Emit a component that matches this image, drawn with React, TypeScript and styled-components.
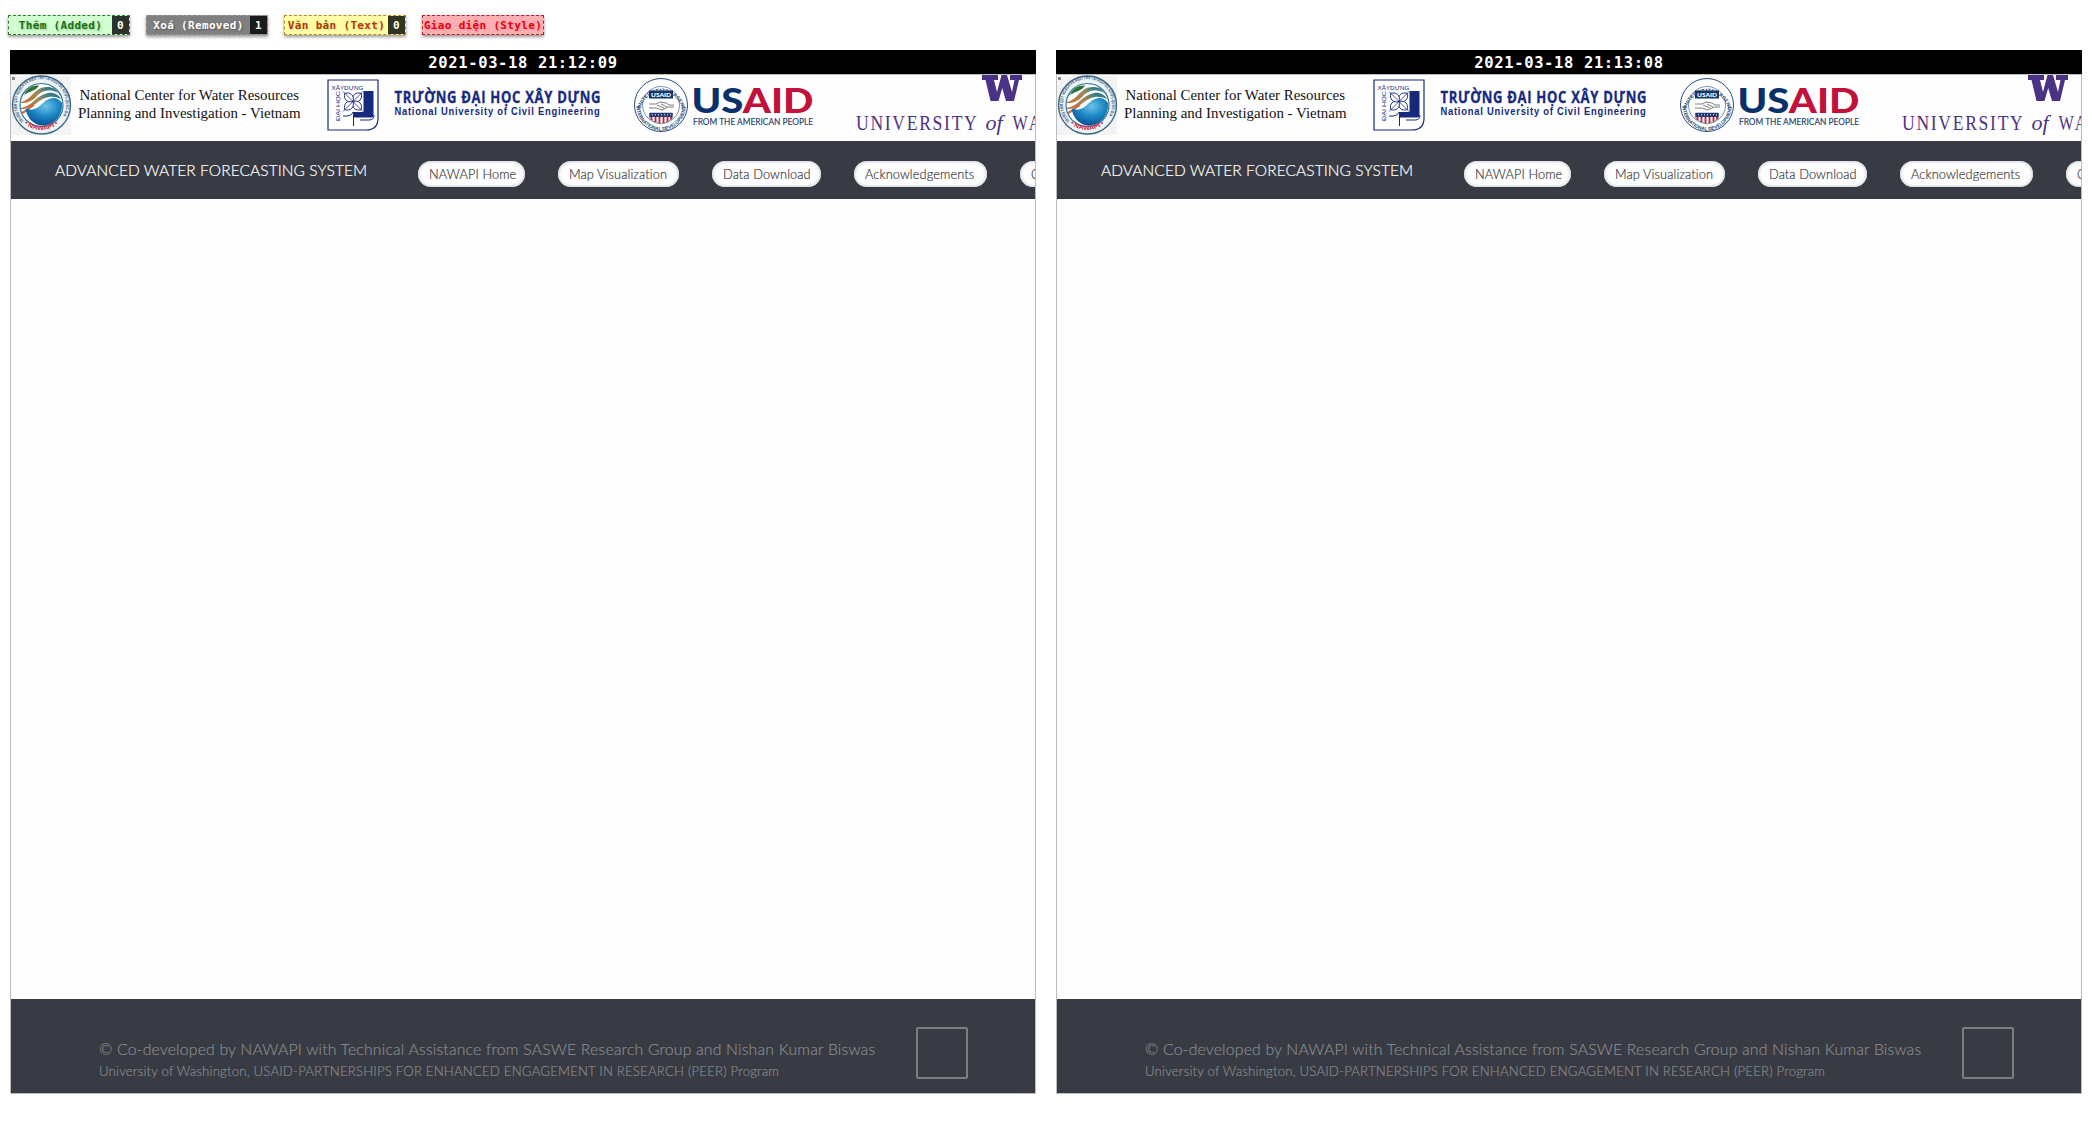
import React from "react";
import styled, { createGlobalStyle, css } from "styled-components";

const GlobalStyle = createGlobalStyle`
  *, *::before, *::after { box-sizing: border-box; }
  body { margin: 0; background: #fff; overflow: hidden; }
`;

const mono = css`
  font-family: "DejaVu Sans Mono", "Liberation Mono", monospace;
  font-weight: 700;
`;

const Page = styled.main`
  height: 1135px;
  padding: 15px 10px 0;
`;

const Legend = styled.div`
  display: flex;
  gap: 16px;
  margin: 0 0 15px -2px;
`;

const Tag = styled.div<{ $bg: string; $fg: string; $line: string; $glow: string }>`
  ${mono}
  display: flex;
  width: 122px;
  height: 20px;
  border: 1px dashed ${(p) => p.$line};
  background: ${(p) => p.$bg};
  color: ${(p) => p.$fg};
  font-size: 11px;
  letter-spacing: 0.33px;
  line-height: 19px;
  white-space: nowrap;
  text-shadow: 1px 1px 2px ${(p) => p.$glow};
  box-shadow: 0 2px 3px rgba(0, 0, 0, 0.4);
`;

const TagLabel = styled.span`
  flex: 1;
  display: flex;
  justify-content: center;
`;

const TagCount = styled.span`
  width: 17px;
  background: rgba(0, 0, 0, 0.8);
  color: #fff;
  text-align: center;
  text-shadow: none;
`;

const Comparison = styled.div`
  display: grid;
  grid-template-columns: 1026px 1026px;
  gap: 20px;
`;

const Stamp = styled.div`
  ${mono}
  height: 24px;
  background: #000;
  color: #fff;
  font-size: 15.5px;
  letter-spacing: 0.63px;
  line-height: 26px;
  text-align: center;
`;

const Frame = styled.section`
  display: flex;
  flex-direction: column;
  height: 1020px;
  border: 1px solid #bdbdbd;
  background: #fdfdfd;
  overflow: hidden;
`;

const LogoStrip = styled.header`
  display: flex;
  flex: none;
  height: 66px;
  background: #fefefe;
  overflow: hidden;

  svg { flex: none; display: block; }
`;

const Nav = styled.nav`
  display: flex;
  flex: none;
  height: 58px;
  padding-left: 44px;
  background: #383b43;
  font-family: Lato, "Open Sans", sans-serif;
  white-space: nowrap;
  overflow: hidden;
`;

const Brand = styled.div`
  flex: none;
  width: 363px;
  color: #fff;
  font-size: 15.5px;
  font-weight: 300;
  letter-spacing: 0.08px;
  line-height: 59px;
  -webkit-text-stroke: 0.2px;
`;

const Pills = styled.div`
  display: flex;
  flex: none;
  gap: 33px;
  padding-top: 20px;
`;

const Pill = styled.a<{ $width: number }>`
  flex: none;
  width: ${(p) => p.$width}px;
  height: 26px;
  padding-left: 11px;
  border-radius: 13px;
  background: #fefefe;
  box-shadow: inset 0 0 3px 1px #cdd1d6;
  color: #404040;
  font-size: 12.8px;
  font-weight: 300;
  letter-spacing: 0.1px;
  line-height: 27px;
  -webkit-text-stroke: 0.2px;
`;

const Content = styled.div`
  flex: 1;
`;

const Footer = styled.footer`
  display: flex;
  flex: none;
  height: 94px;
  padding: 28px 0 0 88px;
  background: #383b43;
  color: #8c8d90;
  font-family: Lato, "Open Sans", sans-serif;
  font-weight: 300;
  white-space: nowrap;
  -webkit-text-stroke: 0.15px;
`;

const Credits = styled.div`
  width: 817px;
  padding-top: 10px;
`;

const CreditMain = styled.p`
  margin: 0;
  font-size: 15.8px;
  letter-spacing: 0.175px;
  line-height: 24px;
`;

const CreditSub = styled.p`
  margin: 0;
  font-size: 13.2px;
  letter-spacing: 0.185px;
  line-height: 20px;
`;

const ToTop = styled.div`
  width: 52px;
  height: 52px;
  border: 2px solid #7c7e84;
  border-radius: 2px;
`;

function NawapiLogo({ id }: { id: string }) {
  return (
    <svg width="305" height="66" viewBox="0 0 305 66">
      <defs>
        <radialGradient id={`${id}-globe`} cx="0.55" cy="0.3" r="0.75">
          <stop offset="0" stopColor="#6cc4e8" />
          <stop offset="0.5" stopColor="#1b86c4" />
          <stop offset="1" stopColor="#08498e" />
        </radialGradient>
        <path id={`${id}-ring`} d="M13 46 A24.6 24.6 0 1 1 48 46" />
        <path id={`${id}-base`} d="M13 48.5 A27 27 0 0 0 48 48.5" />
        <linearGradient id={`${id}-wave`}>
          <stop offset="0" stopColor="#d5652c" />
          <stop offset="0.45" stopColor="#9b8a5c" />
          <stop offset="0.7" stopColor="#397c87" />
        </linearGradient>
      </defs>
      <rect x="0" y="1" width="60" height="59" fill="#f3f3f3" />
      <circle cx="30.5" cy="30" r="29" fill="#eef2f4" stroke="#396b88" strokeWidth="1.4" />
      <circle cx="30.5" cy="30" r="21.5" fill="#fbfcfc" stroke="#2f7895" strokeWidth="1.2" />
      <text fontFamily="Liberation Sans, Arial, sans-serif" fontSize="4.6" fontWeight="700" fill="#34567d">
        <textPath href={`#${id}-ring`} textLength="108" lengthAdjust="spacingAndGlyphs">
          TRUNG TÂM QUY HOẠCH VÀ ĐIỀU TRA TÀI NGUYÊN NƯỚC QUỐC GIA
        </textPath>
      </text>
      <text fontFamily="Liberation Sans, Arial, sans-serif" fontSize="6.2" fontWeight="700" fill="#d5253b">
        <textPath href={`#${id}-base`} textLength="37" lengthAdjust="spacingAndGlyphs">• NAWAPI •</textPath>
      </text>
      <path d="M13 20 C16 13 22 10 28 10.5 C25 16 19 16 13 20Z" fill="#2d7235" />
      <path d="M10 27 C21 25 23 12 36 12 C42 12 45 14 47 18 C38 12 29 17 25 22 C20 27 15 28 10 28Z" fill={`url(#${id}-wave)`} />
      <path d="M10 33 C22 31 25 20 37 18 C43 17 48 20 50 24 C40 19 32 23 27 27 C21 32 15 34 10 34Z" fill={`url(#${id}-wave)`} />
      <path d="M11 38 C17 36 19 31 23 30" fill="none" stroke="#d5652c" strokeWidth="2" />
      <path d="M14.5 33 C21 37 27 33 32 28 C39 22 46 21 51 28 C52 41 43 50.500 31 50.500 C22 50 15.500 42 14.500 33Z" fill={`url(#${id}-globe)`} />
      <rect x="1" y="2" width="3" height="3" fill="#8b8b8b" />
      <g fontFamily="Liberation Serif, Times New Roman, serif" fontSize="15" fill="#111">
        <text x="68.5" y="25" textLength="219.5" lengthAdjust="spacingAndGlyphs">National Center for Water Resources</text>
        <text x="67" y="43" textLength="222.5" lengthAdjust="spacingAndGlyphs">Planning and Investigation - Vietnam</text>
      </g>
    </svg>
  );
}

function NuceLogo() {
  const blue = "#16297c";
  const petal = "M342 26.5 C336.5 23.5 337 17.5 342 15 C347 17.5 347.5 23.5 342 26.5Z";
  return (
    <svg width="305" height="66" viewBox="305 0 305 66">
      <path d="M317 5 H367 V43 Q367 55 355 55 H317 Z" fill="#fff" stroke={blue} strokeWidth="1.2" />
      <g fill={blue} fontFamily="Liberation Sans, Arial, sans-serif">
        <text x="320.5" y="14.5" fontSize="5.6" textLength="32" lengthAdjust="spacingAndGlyphs">XÂYDỰNG</text>
        <text transform="translate(329 46) rotate(-90)" fontSize="6" textLength="30" lengthAdjust="spacingAndGlyphs">ĐẠI HỌC</text>
      </g>
      <path d="M352 16 H362.5 V41 Q362.5 42.500 359 42.500 H342.500 V36 H352Z" fill={blue} />
      <path d="M332 41 Q341 42 342.500 36 V51 M349 45 H358 Q363 45 363 40" fill="none" stroke={blue} strokeWidth="1" />
      <rect x="331.5" y="16" width="21" height="21" fill="#fff" />
      <g fill="#fff" stroke={blue} strokeWidth="0.9">
        <path d={petal} transform="rotate(45 342 26.5)" />
        <path d={petal} transform="rotate(135 342 26.5)" />
        <path d={petal} transform="rotate(225 342 26.5)" />
        <path d={petal} transform="rotate(315 342 26.5)" />
      </g>
      <path d="M332 16.500 L352 36.500 M352 16.500 L332 36.500" stroke={blue} strokeWidth="0.800" />
      <g fill={blue} fontWeight="700">
        <text transform="translate(383.5 28) scale(0.86 1)" fontFamily="Open Sans, sans-serif" fontSize="15.2" stroke={blue} strokeWidth="0.3" textLength="239.500" lengthAdjust="spacing">TRƯỜNG ĐẠI HỌC XÂY DỰNG</text>
        <text transform="translate(383.5 39.500) scale(0.9 1)" fontFamily="Liberation Sans, Arial, sans-serif" fontSize="10.4" textLength="228" lengthAdjust="spacing">National University of Civil Engineering</text>
      </g>
    </svg>
  );
}

function UsaidLogo({ id }: { id: string }) {
  return (
    <svg width="225" height="66" viewBox="610 0 225 66">
      <defs>
        <path id={`${id}-top`} d="M629.500 34 A21.200 21.200 0 0 1 671 34" />
        <path id={`${id}-bottom`} d="M625.500 31 A24.500 24.500 0 0 0 674.500 31" />
      </defs>
      <circle cx="650" cy="30" r="26.500" fill="#fff" stroke="#284d76" strokeWidth="1" />
      <circle cx="650" cy="30" r="18.500" fill="#fff" stroke="#42658a" strokeWidth="0.700" />
      <g fontFamily="Liberation Sans, Arial, sans-serif" fontSize="5" fontWeight="700" fill="#27486f">
        <text><textPath href={`#${id}-top`} textLength="62" lengthAdjust="spacingAndGlyphs">UNITED STATES AGENCY</textPath></text>
        <text><textPath href={`#${id}-bottom`} textLength="76" lengthAdjust="spacingAndGlyphs">INTERNATIONAL DEVELOPMENT</textPath></text>
      </g>
      <rect x="638" y="15.500" width="24" height="8" fill="#12346b" />
      <text x="640" y="21.800" fontFamily="Lato, sans-serif" fontSize="6.200" fontWeight="900" fill="#fff" textLength="20" lengthAdjust="spacingAndGlyphs">USAID</text>
      <path d="M638 29 H645 L649 27 L655 28 L658 30 H663 M638 33 H645 L651 35 L657 32 H663 M646 30 L653 33 M650 29 L656 32" fill="none" stroke="#79817f" strokeWidth="1" />
      <path d="M638.500 38 H661.500 V43 Q658 47 650 49 Q642 47 638.500 43Z" fill="#fff" stroke="#27426f" strokeWidth="0.500" />
      <rect x="638.500" y="38" width="23" height="4" fill="#24396f" />
      <path d="M641 39.800 H660" stroke="#fff" strokeWidth="1" strokeDasharray="1 2" />
      <path d="M640.500 42 V45 M644.500 42 V47 M648.500 42 V48.500 M652.500 42 V48 M656.500 42 V46.500 M660 42 V44.500" stroke="#bd2742" strokeWidth="1.900" />
      <text x="680.500" y="38.300" fontFamily="Lato, sans-serif" fontSize="35" fontWeight="900" textLength="122" lengthAdjust="spacingAndGlyphs">
        <tspan fill="#08306b">US</tspan><tspan fill="#c2113a">AID</tspan>
      </text>
      <text x="682" y="49.700" fontFamily="Lato, sans-serif" fontSize="8.800" fill="#1e3d69" stroke="#1e3d69" strokeWidth="0.150" textLength="120" lengthAdjust="spacingAndGlyphs">FROM THE AMERICAN PEOPLE</text>
    </svg>
  );
}

function WashingtonLogo() {
  return (
    <svg width="320" height="66" viewBox="835 0 320 66">
      <path d="M971 0 H987 V5 H983 L986 17 L990.500 0 H996 L1001 17 L1003.500 5 H999 V0 H1011 V5 H1008 L1003 26 H995 L991.200 13 L987.500 26 H979.500 L974.500 5 H971Z" fill="#4c3285" />
      <g fill="#4c3285" fontFamily="Liberation Serif, Times New Roman, serif" fontSize="22">
        <text transform="translate(845 55) scale(0.8 1)" textLength="151" lengthAdjust="spacing">UNIVERSITY</text>
        <text x="974.5" y="55" fontStyle="italic" textLength="17" lengthAdjust="spacing">of</text>
        <text transform="translate(1001.500 55) scale(0.74 1)" textLength="180" lengthAdjust="spacing">WASHINGTON</text>
      </g>
    </svg>
  );
}

const links = [
  { label: "NAWAPI Home", width: 107 },
  { label: "Map Visualization", width: 121 },
  { label: "Data Download", width: 109 },
  { label: "Acknowledgements", width: 133 },
  { label: "Contact Us", width: 90 },
];

function Snapshot({ id, time }: { id: string; time: string }) {
  return (
    <article>
      <Stamp>{time}</Stamp>
      <Frame>
        <LogoStrip>
          <NawapiLogo id={`${id}-nawapi`} />
          <NuceLogo />
          <UsaidLogo id={`${id}-usaid`} />
          <WashingtonLogo />
        </LogoStrip>
        <Nav>
          <Brand>ADVANCED WATER FORECASTING SYSTEM</Brand>
          <Pills>
            {links.map((link) => (
              <Pill key={link.label} $width={link.width}>{link.label}</Pill>
            ))}
          </Pills>
        </Nav>
        <Content />
        <Footer>
          <Credits>
            <CreditMain>© Co-developed by NAWAPI with Technical Assistance from SASWE Research Group and Nishan Kumar Biswas</CreditMain>
            <CreditSub>University of Washington, USAID-PARTNERSHIPS FOR ENHANCED ENGAGEMENT IN RESEARCH (PEER) Program</CreditSub>
          </Credits>
          <ToTop />
        </Footer>
      </Frame>
    </article>
  );
}

export default function App() {
  return (
    <>
      <GlobalStyle />
      <Page>
        <Legend>
          <Tag $bg="#d0ffd0" $fg="#1d6b1d" $line="#2d7a2d" $glow="#8c8"><TagLabel>Thêm (Added)</TagLabel><TagCount>0</TagCount></Tag>
          <Tag $bg="#808080" $fg="#fff" $line="#999" $glow="#555"><TagLabel>Xoá (Removed)</TagLabel><TagCount>1</TagCount></Tag>
          <Tag $bg="#ffffa8" $fg="#b03a00" $line="#b5892e" $glow="#dd9"><TagLabel>Văn bản (Text)</TagLabel><TagCount>0</TagCount></Tag>
          <Tag $bg="#ffaeb2" $fg="#e60012" $line="#b3202c" $glow="#e99"><TagLabel>Giao diện (Style)</TagLabel></Tag>
        </Legend>
        <Comparison>
          <Snapshot id="before" time="2021-03-18 21:12:09" />
          <Snapshot id="after" time="2021-03-18 21:13:08" />
        </Comparison>
      </Page>
    </>
  );
}
